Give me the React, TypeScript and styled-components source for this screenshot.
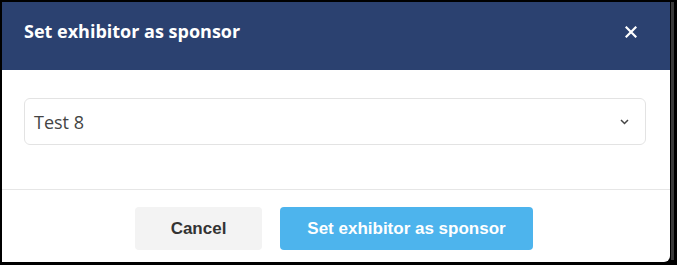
import React from "react";
import styled, { createGlobalStyle } from "styled-components";

const Global = createGlobalStyle`
  html, body { margin: 0; padding: 0; background: #000; }
  body { width: 677px; height: 265px; overflow: hidden; }
`;

const Page = styled.div`
  display: flex;
  width: 677px;
  height: 265px;
  padding: 2px 0 0 2px;
  box-sizing: border-box;
  background: #000;
`;

const Modal = styled.div`
  width: 668px;
  height: 260px;
  display: flex;
  flex-direction: column;
  background: #fff;
  border-bottom-right-radius: 6px;
  overflow: hidden;
`;

const Edge = styled.div`
  width: 3px;
  height: 258px;
  margin-left: 1px;
  background: #3a3a3a;
`;

const Header = styled.div`
  height: 68px;
  box-sizing: border-box;
  background: #2b4170;
  display: flex;
  justify-content: space-between;
  align-items: flex-start;
  padding: 17px 33px 0 22px;
`;

const Title = styled.h2`
  margin: 0;
  font-family: "Open Sans", sans-serif;
  font-weight: 700;
  font-size: 18px;
  line-height: 24px;
  color: #fff;
`;

const Close = styled.button`
  border: 0;
  background: none;
  padding: 0;
  margin-top: 7px;
  width: 12px;
  height: 12px;
  display: flex;
  align-items: center;
  justify-content: center;
  cursor: pointer;
`;

const Body = styled.div`
  height: 120px;
  box-sizing: border-box;
  padding: 28px 24px 0 22px;
  border-bottom: 1px solid #e6e6e6;
`;

const Select = styled.div`
  height: 47px;
  box-sizing: border-box;
  border: 1px solid #e3e3e3;
  border-radius: 6px;
  display: flex;
  align-items: center;
  justify-content: space-between;
  padding: 0 16px 0 9px;
  font-family: "Open Sans", sans-serif;
  font-size: 18px;
  color: #444;
`;

const Footer = styled.div`
  flex: 1;
  display: flex;
  justify-content: center;
  align-items: flex-start;
  gap: 18px;
  padding-top: 17px;
  padding-right: 4px;
`;

const Button = styled.button<{ $primary?: boolean }>`
  height: 43px;
  border: 0;
  border-radius: 4px;
  font-family: "Liberation Sans", Arial, sans-serif;
  font-weight: 700;
  font-size: 17px;
  padding: 0;
  width: ${(p) => (p.$primary ? "253px" : "127px")};
  background: ${(p) => (p.$primary ? "#4db4ed" : "#f3f3f3")};
  color: ${(p) => (p.$primary ? "#fff" : "#333")};
  cursor: pointer;
`;

export default function App() {
  return (
    <>
      <Global />
      <Page>
        <Modal>
          <Header>
            <Title>Set exhibitor as sponsor</Title>
            <Close aria-label="Close">
              <svg width="12" height="12" viewBox="0 0 12 12">
                <path d="M1.5 1.5 L10.5 10.5 M10.5 1.5 L1.5 10.5" stroke="#fff" strokeWidth="2.2" strokeLinecap="square" />
              </svg>
            </Close>
          </Header>
          <Body>
            <Select>
              <span>Test 8</span>
              <svg width="9" height="6" viewBox="0 0 9 6">
                <path d="M1 1 L4.5 4.5 L8 1" stroke="#444" strokeWidth="1.5" fill="none" />
              </svg>
            </Select>
          </Body>
          <Footer>
            <Button>Cancel</Button>
            <Button $primary>Set exhibitor as sponsor</Button>
          </Footer>
        </Modal>
        <Edge />
      </Page>
    </>
  );
}
